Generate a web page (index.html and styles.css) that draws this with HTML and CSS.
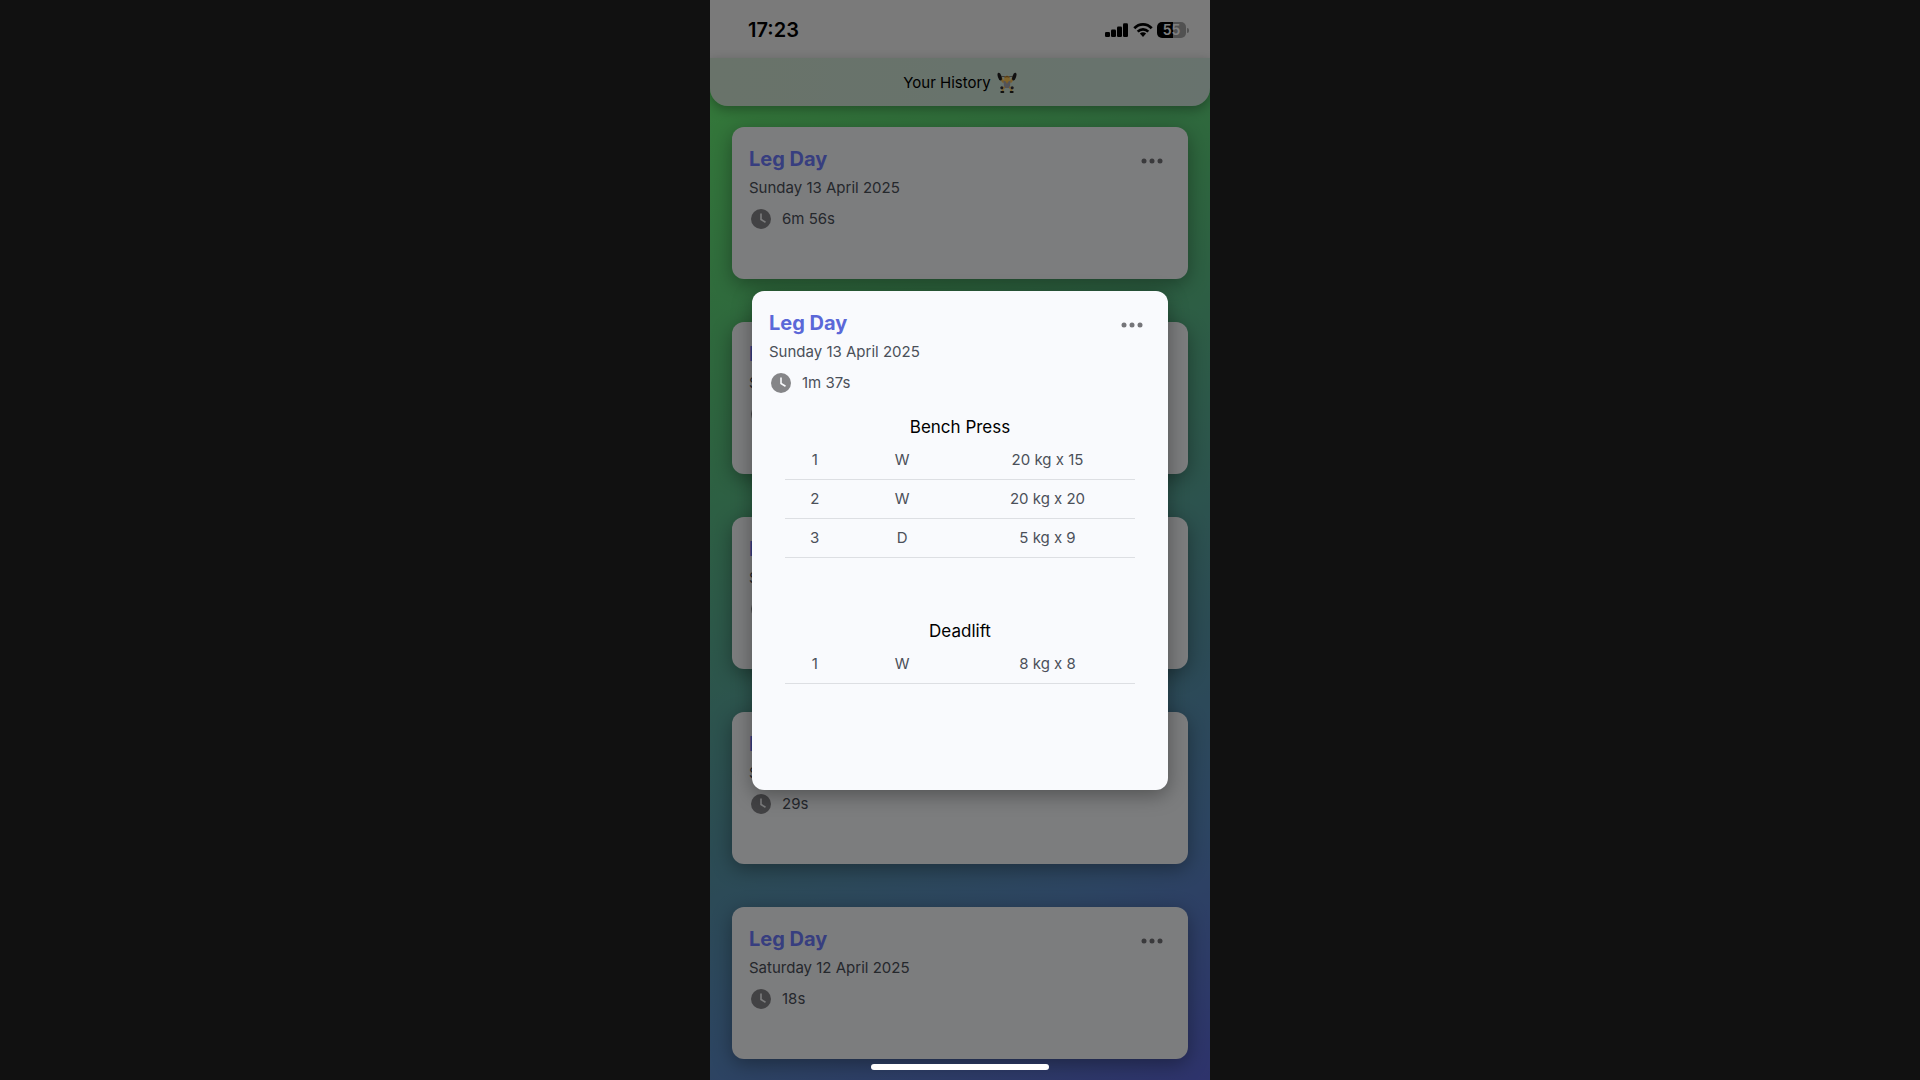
FILE: index.html
```html
<!DOCTYPE html>
<html lang="en">
<head>
<meta charset="utf-8">
<meta name="viewport" content="width=device-width, initial-scale=1">
<title>Your History</title>
<link rel="stylesheet" href="styles.css">
</head>
<body>
<svg class="sprite" aria-hidden="true">
  <symbol id="clock" viewBox="0 0 24 24">
    <circle cx="12" cy="12" r="10" fill="currentColor"/>
    <path class="hands" d="M12 6.5V12.5L16.5 15.2" fill="none" stroke-width="1.6"/>
  </symbol>
  <symbol id="dots" viewBox="0 0 24 24">
    <circle cx="4" cy="12" r="2.5" fill="currentColor"/>
    <circle cx="12" cy="12" r="2.5" fill="currentColor"/>
    <circle cx="20" cy="12" r="2.5" fill="currentColor"/>
  </symbol>
</svg>
<div class="phone">
  <div class="status">
    <time class="clock-time">17:23</time>
    <div class="indicators">
      <svg width="24" height="16" viewBox="0 0 24 16" aria-hidden="true">
        <rect x="0" y="10" width="5" height="5" rx="1.3"/>
        <rect x="6" y="7.5" width="5" height="7.5" rx="1.3"/>
        <rect x="12" y="4.5" width="5" height="10.5" rx="1.3"/>
        <rect x="18" y="1.2" width="5" height="13.8" rx="1.3"/>
      </svg>
      <svg width="20" height="16" viewBox="0 0 20 16" aria-hidden="true">
        <g fill="none" stroke="#000" stroke-width="2.7">
          <path d="M1.3 6.3C6.2 1.1 13.8 1.1 18.7 6.3"/>
          <path d="M4.7 9.6C7.7 6.6 12.3 6.6 15.3 9.6"/>
        </g>
        <path d="M6.9 11.6C8.7 9.9 11.3 9.9 13.1 11.6L10 14.9Z"/>
      </svg>
      <div class="battery"><span class="level">55</span></div>
    </div>
  </div>
  <header class="header">
    <h1>Your History</h1>
    <svg width="20" height="22" viewBox="0 0 20 22" role="img" aria-label="Weightlifter">
      <path d="M1.5 4.5L18.5 4.5" stroke="#777" stroke-width="1"/>
      <path d="M3.5 5L6 9.5H14L16.5 5" fill="none" stroke="#f5bd54" stroke-width="2.5" stroke-linecap="round" stroke-linejoin="round"/>
      <ellipse cx="2.7" cy="4.6" rx="1.8" ry="4" fill="#202020" transform="rotate(-18 2.7 4.6)"/>
      <ellipse cx="17.3" cy="4.6" rx="1.8" ry="4" fill="#202020" transform="rotate(18 17.3 4.6)"/>
      <path d="M6.5 9H13.5L12.8 16H7.2Z" fill="#a7a7b0"/>
      <path d="M8.3 9L10 12L11.7 9Z" fill="#f5bd54"/>
      <circle cx="10" cy="6.7" r="2.9" fill="#ffc957"/>
      <path d="M7.2 5.8Q10 1.8 12.8 5.8Q10 4.7 7.2 5.8Z" fill="#a8752c"/>
      <path d="M8 15.5L5 15.8L6 19M12 15.5L15 15.8L14 19" fill="none" stroke="#f5bd54" stroke-width="2"/>
      <circle cx="4.8" cy="15.7" r="1.5" fill="#303040"/>
      <circle cx="15.2" cy="15.7" r="1.5" fill="#303040"/>
      <rect x="3.3" y="19" width="4" height="2" rx="1" fill="#202020"/>
      <rect x="12.7" y="19" width="4" height="2" rx="1" fill="#202020"/>
    </svg>
  </header>
  <main class="list">
    <article class="card">
      <div class="card-top"><h2>Leg Day</h2><button type="button" aria-label="Options"><svg class="icon"><use href="#dots"/></svg></button></div>
      <p class="date">Sunday 13 April 2025</p>
      <p class="duration"><svg class="icon"><use href="#clock"/></svg>6m 56s</p>
    </article>
    <article class="card">
      <div class="card-top"><h2>Leg Day</h2><button type="button" aria-label="Options"><svg class="icon"><use href="#dots"/></svg></button></div>
      <p class="date">Sunday 13 April 2025</p>
      <p class="duration"><svg class="icon"><use href="#clock"/></svg>1m 37s</p>
    </article>
    <article class="card">
      <div class="card-top"><h2>Leg Day</h2><button type="button" aria-label="Options"><svg class="icon"><use href="#dots"/></svg></button></div>
      <p class="date">Sunday 13 April 2025</p>
      <p class="duration"><svg class="icon"><use href="#clock"/></svg>37s</p>
    </article>
    <article class="card">
      <div class="card-top"><h2>Leg Day</h2><button type="button" aria-label="Options"><svg class="icon"><use href="#dots"/></svg></button></div>
      <p class="date">Sunday 13 April 2025</p>
      <p class="duration"><svg class="icon"><use href="#clock"/></svg>29s</p>
    </article>
    <article class="card">
      <div class="card-top"><h2>Leg Day</h2><button type="button" aria-label="Options"><svg class="icon"><use href="#dots"/></svg></button></div>
      <p class="date">Saturday 12 April 2025</p>
      <p class="duration"><svg class="icon"><use href="#clock"/></svg>18s</p>
    </article>
  </main>
  <div class="overlay">
    <section class="card modal" role="dialog" aria-label="Leg Day">
      <div class="card-top"><h2>Leg Day</h2><button type="button" aria-label="Options"><svg class="icon"><use href="#dots"/></svg></button></div>
      <p class="date">Sunday 13 April 2025</p>
      <p class="duration"><svg class="icon"><use href="#clock"/></svg>1m 37s</p>
      <table>
        <caption>Bench Press</caption>
        <colgroup><col class="set"><col class="kind"><col class="load"></colgroup>
        <tbody>
          <tr><td>1</td><td>W</td><td>20 kg x 15</td></tr>
          <tr><td>2</td><td>W</td><td>20 kg x 20</td></tr>
          <tr><td>3</td><td>D</td><td>5 kg x 9</td></tr>
        </tbody>
      </table>
      <table>
        <caption>Deadlift</caption>
        <colgroup><col class="set"><col class="kind"><col class="load"></colgroup>
        <tbody>
          <tr><td>1</td><td>W</td><td>8 kg x 8</td></tr>
        </tbody>
      </table>
    </section>
  </div>
  <div class="home-bar"></div>
</div>
</body>
</html>
```
FILE: styles.css
```css
* { box-sizing: border-box; }

body {
  margin: 0;
  background: #111;
  font-family: Inter, "Liberation Sans", sans-serif;
  font-size: 15px;
  line-height: 24px;
  color: #4b5059;
}

h1, h2, p { margin: 0; }

.sprite { position: absolute; width: 0; height: 0; }

.phone {
  position: relative;
  display: flex;
  flex-direction: column;
  max-width: 500px;
  min-height: 100vh;
  margin: 0 auto;
  overflow: hidden;
  background: linear-gradient(155deg, #6afa70 0%, #5ccc7c 30%, #5898a8 65%, #5a8ac4 81%, #5c66d8 100%);
}

/* Status bar */
.status {
  display: flex;
  justify-content: space-between;
  align-items: center;
  height: 58px;
  padding: 2px 22px 0 38px;
  background: #f4f4f4;
  color: #000;
}

.clock-time { font-size: 20px; font-weight: 600; }
.indicators { display: flex; align-items: center; gap: 4px; }

.battery {
  position: relative;
  width: 29px;
  height: 16px;
  margin-right: 2px;
  border-radius: 5px;
  background: linear-gradient(90deg, #000 55%, #a2a2a2 55%);
}

.battery::after {
  content: "";
  position: absolute;
  right: -3px;
  top: 6px;
  width: 2px;
  height: 5px;
  border-radius: 0 2px 2px 0;
  background: #a2a2a2;
}

.level {
  display: block;
  text-align: center;
  font-size: 14px;
  line-height: 16px;
  font-weight: 600;
  color: #fff;
}

/* Page header */
.header {
  display: flex;
  justify-content: center;
  align-items: center;
  gap: 6px;
  height: 48px;
  padding-top: 2px;
  border-radius: 0 0 18px 18px;
  background: linear-gradient(90deg, #d2e6d4, #d0e6dc);
  box-shadow: 0 4px 12px rgba(0, 0, 0, .3);
}

.header h1 { font-size: 15px; font-weight: 400; color: #000; }

/* Workout cards */
.list {
  display: flex;
  flex-direction: column;
  gap: 43px;
  padding: 21px 22px;
}

.card {
  min-height: 152px;
  padding: 18px 17px;
  border-radius: 12px;
  background: #f9fafd;
  box-shadow: 0 5px 20px rgba(0, 0, 0, .35);
}

.card-top { display: flex; justify-content: space-between; align-items: center; }

.card h2 {
  font-size: 20px;
  line-height: 28px;
  font-weight: 700;
  color: #5b68d8;
}

.card button {
  display: flex;
  margin: 4px 7px 0 0;
  padding: 0;
  border: 0;
  background: none;
  color: #757579;
}

.list h2 { color: #6f7dff; }

.icon { width: 24px; height: 24px; }
.hands { stroke: #f9fafd; }
.date { margin-top: 3px; }
.duration { display: flex; gap: 9px; margin-top: 7px; }
.duration .icon { color: #858588; }

/* Workout details */
.overlay {
  position: absolute;
  inset: 0;
  display: flex;
  align-items: center;
  padding: 0 42px;
  background: rgba(0, 0, 0, .5);
}

.modal { flex: 1; padding-bottom: 106px; }

table {
  width: calc(100% - 32px);
  margin: 18px auto 0;
  border-collapse: separate;
  border-spacing: 0;
  table-layout: fixed;
  text-align: center;
}

table + table { margin-top: 59px; }

caption { font-size: 17px; line-height: 28px; color: #000; }

.set { width: 17%; }
.kind { width: 33%; }
.load { width: 50%; }

td { height: 39px; padding: 0; border-bottom: 1px solid #dddfe3; }

.home-bar {
  position: absolute;
  bottom: 10px;
  left: 50%;
  width: 178px;
  height: 6px;
  margin-left: -89px;
  border-radius: 3px;
  background: #fff;
}
```
